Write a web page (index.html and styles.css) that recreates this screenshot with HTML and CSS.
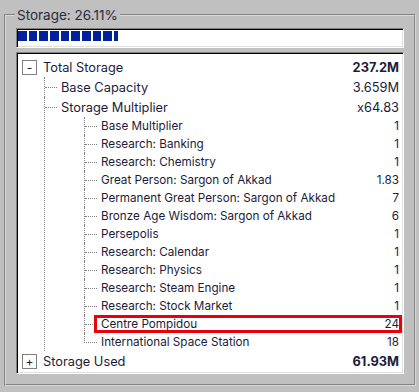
FILE: index.html
```html
<!DOCTYPE html>
<html>
<head>
<meta charset="utf-8">
<link rel="stylesheet" href="styles.css">
</head>
<body>
<fieldset class="group">
  <legend class="group-title">Storage: 26.11%</legend>
  <div class="progress"><div class="progress-fill" style="width:100px"></div></div>
  <div class="tree">
    <ul class="level level0">
      <li class="node">
        <div class="row big"><span class="toggle">-</span><span class="label">Total Storage</span><span class="value bold">237.2M</span></div>
        <ul class="level level1">
          <li class="node line">
            <div class="row big"><span class="conn"></span><span class="label">Base Capacity</span><span class="value">3.659M</span></div>
          </li>
          <li class="node line">
            <div class="row big"><span class="conn"></span><span class="label">Storage Multiplier</span><span class="value">x64.83</span></div>
            <ul class="level level2">
              <li class="node line"><div class="row"><span class="conn"></span><span class="label">Base Multiplier</span><span class="value">1</span></div></li>
              <li class="node line"><div class="row"><span class="conn"></span><span class="label">Research: Banking</span><span class="value">1</span></div></li>
              <li class="node line"><div class="row"><span class="conn"></span><span class="label">Research: Chemistry</span><span class="value">1</span></div></li>
              <li class="node line"><div class="row"><span class="conn"></span><span class="label">Great Person: Sargon of Akkad</span><span class="value">1.83</span></div></li>
              <li class="node line"><div class="row"><span class="conn"></span><span class="label">Permanent Great Person: Sargon of Akkad</span><span class="value">7</span></div></li>
              <li class="node line"><div class="row"><span class="conn"></span><span class="label">Bronze Age Wisdom: Sargon of Akkad</span><span class="value">6</span></div></li>
              <li class="node line"><div class="row"><span class="conn"></span><span class="label">Persepolis</span><span class="value">1</span></div></li>
              <li class="node line"><div class="row"><span class="conn"></span><span class="label">Research: Calendar</span><span class="value">1</span></div></li>
              <li class="node line"><div class="row"><span class="conn"></span><span class="label">Research: Physics</span><span class="value">1</span></div></li>
              <li class="node line"><div class="row"><span class="conn"></span><span class="label">Research: Steam Engine</span><span class="value">1</span></div></li>
              <li class="node line"><div class="row"><span class="conn"></span><span class="label">Research: Stock Market</span><span class="value">1</span></div></li>
              <li class="node line"><div class="row highlight"><span class="conn"></span><span class="label">Centre Pompidou</span><span class="value">24</span></div></li>
              <li class="node last"><div class="row"><span class="conn"></span><span class="label">International Space Station</span><span class="value">18</span></div></li>
            </ul>
          </li>
        </ul>
      </li>
      <li class="node">
        <div class="row big"><span class="toggle">+</span><span class="label">Storage Used</span><span class="value bold">61.93M</span></div>
      </li>
    </ul>
  </div>
</fieldset>
</body>
</html>
```
FILE: styles.css
```css
html, body {
  margin: 0;
  padding: 0;
  background: #c0c0c0;
}
body {
  font-family: Inter, "Noto Sans", sans-serif;
  color: #1c1c3a;
}
.group {
  margin: 6px 3px 4px 4px;
  padding: 4px 10px 10px 10px;
  border: 2px groove #d8d8d8;
  min-width: 0;
}
.group-title {
  font-size: 13.5px;
  line-height: 18px;
  padding: 0 2px;
  margin-left: -1px;
  color: #2a2a3a;
}
.progress {
  height: 14px;
  padding: 2px 1px;
  box-sizing: content-box;
  background: #fff;
  border: 1px solid;
  border-color: #808080 #fff #fff #808080;
  box-shadow: inset 1px 1px 0 #000, inset -1px -1px 0 #dfdfdf;
}
.progress-fill {
  height: 10px;
  background: repeating-linear-gradient(90deg, #00209c 0, #00209c 8.67px, transparent 8.67px, transparent 10.67px);
}
.tree {
  margin-top: 4px;
  background: #fff;
  border: 1px solid;
  border-color: #808080 #fff #fff #808080;
  box-shadow: inset 1px 1px 0 #000, inset -1px -1px 0 #dfdfdf;
  padding: 4px 4px 2px 5px;
}
.level {
  list-style: none;
  margin: 0;
  padding: 0;
}
.level1 {
  margin-left: 22px;
}
.level2 {
  margin-left: 39px;
}
.node.line {
  border-left: 1px dotted #808080;
}
.node.last {
  padding-left: 1px;
}
.row {
  display: flex;
  align-items: center;
  height: 18px;
  font-size: 11.7px;
  position: relative;
}
.row.big {
  height: 20px;
  font-size: 12.8px;
}
.toggle {
  width: 13px;
  height: 13px;
  border: 1px solid #808080;
  background: #fff;
  display: flex;
  align-items: center;
  justify-content: center;
  font-size: 12px;
  line-height: 13px;
  margin-right: 6px;
  color: #1c1c3a;
}
.conn {
  align-self: flex-start;
  width: 12px;
  height: 50%;
  border-bottom: 1px dotted #808080;
  margin-right: 4px;
  flex: none;
}
.last .conn {
  margin-left: -1px;
  border-left: 1px dotted #808080;
}
.label {
  flex: 1;
  white-space: nowrap;
}
.value {
  white-space: nowrap;
}
.value.bold {
  font-weight: 700;
}
.highlight::after {
  content: "";
  position: absolute;
  left: 9px;
  right: -3px;
  top: 0;
  bottom: 0;
  border: 3px solid #e8000b;
}
```
